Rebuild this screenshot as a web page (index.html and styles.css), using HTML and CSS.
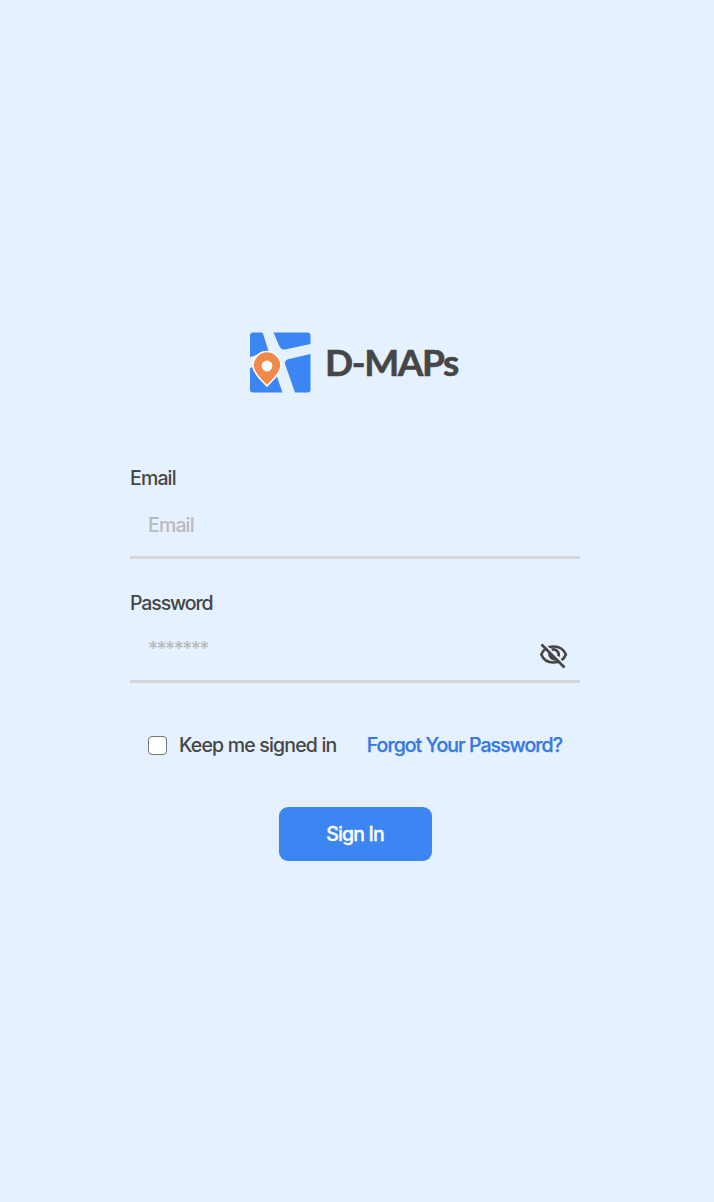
FILE: index.html
```html
<!DOCTYPE html>
<html lang="en">
<head>
<meta charset="utf-8">
<title>D-MAPs</title>
<link rel="stylesheet" href="styles.css">
</head>
<body>
<main class="login">
  <header class="brand">
    <svg class="logo" viewBox="0 0 62 62" aria-hidden="true">
      <g fill="#3b86f2">
        <path d="M3 .5H11.500Q12.500.5 13 1.500L21 27 29.500 52 32.500 60.500H3Q0 60.500 0 57.500V3.500Q0 .5 3 .5Z"/>
        <path d="M23.500.5H57.500Q60.500.5 60.500 3.500V12L35 17.500Q31.500 18 29.500 14.500Z"/>
        <path d="M60.500 22V57.500Q60.500 60.500 57.500 60.500H45L35 32Q34.500 28.500 38 27.300Z"/>
      </g>
      <path fill="#e5f1fe" d="M0 25 10 22 8 36H0Z"/>
      <path fill="#3b86f2" d="M0 37Q0 35.500 3 35L9 44 0 50Z"/>
      <path fill="#f1894a" stroke="#fff" stroke-width="1.600" d="M17 54C13 49.500 3 42 3 33.500a14 14 0 0 1 28 0C31 42 21 49.500 17 54Z"/>
      <circle cx="17" cy="34" r="5.400" fill="#fff"/>
    </svg>
    <h1 class="name">D-MAPs</h1>
  </header>
  <form class="form">
    <label class="label" for="email">Email</label>
    <input class="field" id="email" type="text" placeholder="Email">
    <label class="label pass" for="password">Password</label>
    <div class="field secret">
      <input class="secret-input" id="password" type="text" placeholder="*******">
      <svg class="eye" viewBox="0 0 34 30" aria-hidden="true">
        <path class="line" d="M5.300 14.500C9.500 3.800 25.500 3.800 29.900 14.500 25.500 25.200 9.500 25.200 5.300 14.500Z"/>
        <path class="line" d="M15.500 9.800A5.300 5.300 0 0 1 22.400 16.500"/>
        <path class="pupil" d="M12.500 11 21.700 20.200C17 22 10.500 18 12.500 11Z"/>
        <path class="gap" d="M7.500 3.500 30.500 26.500"/>
        <path class="line" d="M5.500 4.500 28.500 27.500"/>
      </svg>
    </div>
    <div class="options">
      <label class="keep"><input class="check" type="checkbox"><span class="keep-text">Keep me signed in</span></label>
      <a class="forgot" href="#">Forgot Your Password?</a>
    </div>
    <button class="submit" type="button">Sign In</button>
  </form>
</main>
</body>
</html>
```
FILE: styles.css
```css
* { box-sizing: border-box; }
body { margin: 0; min-height: 1202px; background: #e5f1fe; color: #464646; font: 500 19.5px/24px Inter, sans-serif; }
.login { width: 450px; margin-left: 130px; padding-top: 332px; }
.brand { display: flex; align-items: center; height: 62px; margin-left: 120px; }
.logo { width: 62px; height: 62px; flex: none; }
.name { margin: 0 0 2px 13px; font-family: Lato, sans-serif; font-size: 37px; line-height: 44px; font-weight: 700; letter-spacing: -1.4px; white-space: nowrap; -webkit-text-stroke: 0.6px #464646; }
.form { display: flex; flex-direction: column; margin-top: 72px; }
.label { height: 24px; letter-spacing: -0.85px; }
.field { width: 100%; height: 56px; margin-top: 13px; padding: 0 18px 9px; border: 0; border-bottom: 3px solid #d5d5d5; background: transparent; font: inherit; letter-spacing: -0.85px; outline: 0; }
::placeholder { color: #bababa; opacity: 1; }
.pass { margin-top: 32px; letter-spacing: -1.1px; }
.secret { display: flex; height: 55px; padding: 0 10px 0 18px; }
.secret-input { flex: 1; min-width: 0; height: 42px; padding: 0; border: 0; background: transparent; font: inherit; letter-spacing: -1.6px; outline: 0; }
.eye { flex: none; width: 34px; height: 30px; margin-top: 12px; }
.line { fill: none; stroke: #464646; stroke-width: 2.6; }
.pupil { fill: #464646; }
.gap { fill: none; stroke: #e5f1fe; stroke-width: 2; }
.options { display: flex; align-items: center; justify-content: space-between; height: 24px; margin-top: 50px; padding: 0 18px; }
.keep { display: flex; align-items: center; }
.check { appearance: none; width: 19px; height: 19px; margin: 0 12px 0 0; border: 1.5px solid #767676; border-radius: 4px; background: #fff; }
.keep-text { letter-spacing: -0.82px; white-space: nowrap; }
.forgot { color: #3578e5; letter-spacing: -0.95px; text-decoration: none; white-space: nowrap; -webkit-text-stroke: 0.25px #3578e5; }
.submit { align-self: center; width: 153px; height: 54px; margin-top: 50px; padding: 0; border: 0; border-radius: 9px; background: #3b86f2; color: #fff; font: inherit; letter-spacing: -0.85px; -webkit-text-stroke: 0.3px #fff; }
```
